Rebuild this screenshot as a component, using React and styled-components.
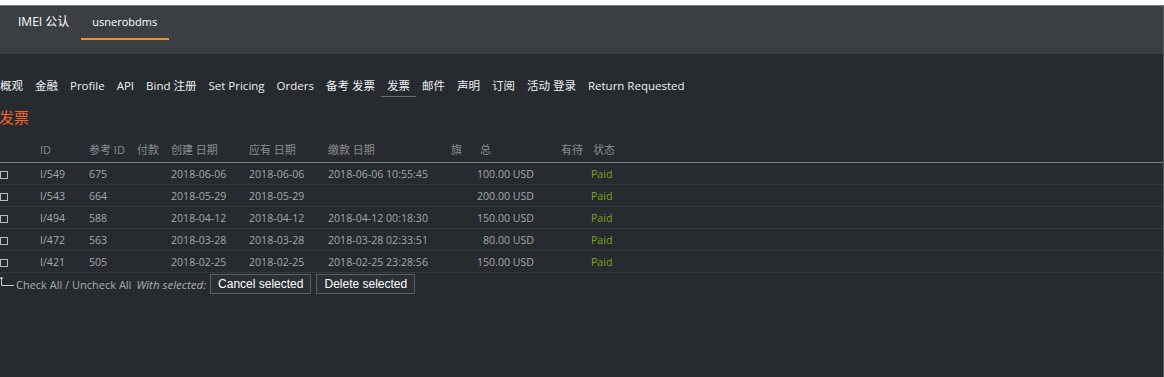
import React from "react";
import styled, { createGlobalStyle } from "styled-components";

const Global = createGlobalStyle`
  html, body {
    margin: 0;
    padding: 0;
    background: #ffffff;
    overflow: hidden;
  }
  body {
    font-family: "Open Sans", "Noto Sans CJK SC", sans-serif;
  }
`;

const Page = styled.div`
  margin-top: 5px;
  height: 372px;
  background: #272a2f;
  border-top: 1px solid #7b7e82;
  border-right: 1px solid #5a5d61;
  box-sizing: border-box;
  overflow: hidden;
`;

const TopBar = styled.div`
  height: 48px;
  background: #3b3f43;
  display: flex;
  align-items: flex-start;
  padding-left: 6px;
`;

const TopTab = styled.div`
  padding: 0 12px 0 ${(p) => (p.active ? 11 : 12)}px;
  height: 32px;
  line-height: 32px;
  font-size: ${(p) => (p.active ? "11px" : "12px")};
  color: #ffffff;
  border-bottom: 2px solid ${(p) => (p.active ? "#f0952c" : "transparent")};
`;

const Nav = styled.div`
  display: flex;
  margin-top: 22px;
  margin-left: -6px;
`;

const NavItem = styled.div`
  padding: 0 6px;
  font-size: 11.5px;
  line-height: 20px;
  color: #eef0f2;
  white-space: nowrap;
  border-bottom: 1px solid ${(p) => (p.active ? "#6a6d71" : "transparent")};
`;

const Title = styled.div`
  color: #f0652a;
  font-size: 15px;
  margin-top: 8px;
  line-height: 24px;
  margin-left: -1px;
`;

const Table = styled.table`
  border-collapse: collapse;
  table-layout: fixed;
  width: 100%;
  margin-top: 10px;
  font-size: 10.6px;
`;

const Th = styled.th`
  text-align: ${(p) => p.align || "left"};
  padding: 0 0 3px ${(p) => p.indent || 0}px;
  font-weight: normal;
  font-size: 11px;
  color: #8b8e92;
  height: 20px;
  border-bottom: 1px solid #7a7d81;
  white-space: nowrap;
`;

const Td = styled.td`
  text-align: ${(p) => p.align || "left"};
  padding: 0 0 0 ${(p) => p.indent || 0}px;
  color: ${(p) => p.color || "#a5a8ab"};
  height: 21px;
  border-bottom: 1px solid #363a3f;
  white-space: nowrap;
`;

const Box = styled.span`
  display: inline-block;
  width: 6px;
  height: 6px;
  border: 1px solid #b9bbbe;
  vertical-align: middle;
`;

const Footer = styled.div`
  display: flex;
  align-items: center;
  margin-top: 1px;
  font-size: 11px;
  color: #a9acaf;
`;

const Arrow = styled.svg`
  margin-right: 2px;
  margin-top: -4px;
`;

const Italic = styled.span`
  font-style: italic;
  font-size: 11.5px;
  margin-left: 5px;
  margin-right: 4px;
`;

const Button = styled.button`
  font-family: "Liberation Sans", Arial, sans-serif;
  font-size: 12px;
  color: #ffffff;
  background: #2c2f33;
  border: 1px solid #5b5e62;
  padding: 0 7px;
  height: 20px;
  margin-right: 5px;
`;

const rows = [
  ["I/549", "675", "2018-06-06", "2018-06-06", "2018-06-06 10:55:45", "100.00 USD"],
  ["I/543", "664", "2018-05-29", "2018-05-29", "", "200.00 USD"],
  ["I/494", "588", "2018-04-12", "2018-04-12", "2018-04-12 00:18:30", "150.00 USD"],
  ["I/472", "563", "2018-03-28", "2018-03-28", "2018-03-28 02:33:51", "80.00 USD"],
  ["I/421", "505", "2018-02-25", "2018-02-25", "2018-02-25 23:28:56", "150.00 USD"],
];

const navs = ["概观", "金融", "Profile", "API", "Bind 注册", "Set Pricing", "Orders", "备考 发票", "发票", "邮件", "声明", "订阅", "活动 登录", "Return Requested"];

export default function App() {
  return (
    <Page>
      <Global />
      <TopBar>
        <TopTab>IMEI 公认</TopTab>
        <TopTab active>usnerobdms</TopTab>
      </TopBar>
      <Nav>
        {navs.map((n, i) => (
          <NavItem key={n + i} active={i === 8}>{n}</NavItem>
        ))}
      </Nav>
      <Title>发票</Title>
      <Table>
        <colgroup>
          <col style={{ width: 40 }} />
          <col style={{ width: 49 }} />
          <col style={{ width: 48 }} />
          <col style={{ width: 34 }} />
          <col style={{ width: 78 }} />
          <col style={{ width: 79 }} />
          <col style={{ width: 123 }} />
          <col style={{ width: 26 }} />
          <col style={{ width: 57 }} />
          <col style={{ width: 49 }} />
          <col style={{ width: 40 }} />
          <col />
        </colgroup>
        <thead>
          <tr>
            <Th></Th>
            <Th>ID</Th>
            <Th>参考 ID</Th>
            <Th>付款</Th>
            <Th>创建 日期</Th>
            <Th>应有 日期</Th>
            <Th>缴款 日期</Th>
            <Th>旗</Th>
            <Th indent={3}>总</Th>
            <Th align="right">有待</Th>
            <Th indent={10}>状态</Th>
            <Th></Th>
          </tr>
        </thead>
        <tbody>
          {rows.map((r) => (
            <tr key={r[0]}>
              <Td><Box /></Td>
              <Td color="#a9acaf">{r[0]}</Td>
              <Td>{r[1]}</Td>
              <Td></Td>
              <Td>{r[2]}</Td>
              <Td>{r[3]}</Td>
              <Td>{r[4]}</Td>
              <Td></Td>
              <Td align="right">{r[5]}</Td>
              <Td></Td>
              <Td indent={8} color="#7ca51a">Paid</Td>
              <Td></Td>
            </tr>
          ))}
        </tbody>
      </Table>
      <Footer>
        <Arrow width="14" height="10" viewBox="0 0 14 10">
          <path d="M1.5 0 V8.5 H14" stroke="#c8cacc" strokeWidth="1" fill="none" />
          <path d="M0 2 L1.5 0 L3 2" stroke="#c8cacc" strokeWidth="1" fill="none" />
        </Arrow>
        Check All / Uncheck All
        <Italic>With selected:</Italic>
        <Button>Cancel selected</Button>
        <Button>Delete selected</Button>
      </Footer>
    </Page>
  );
}
